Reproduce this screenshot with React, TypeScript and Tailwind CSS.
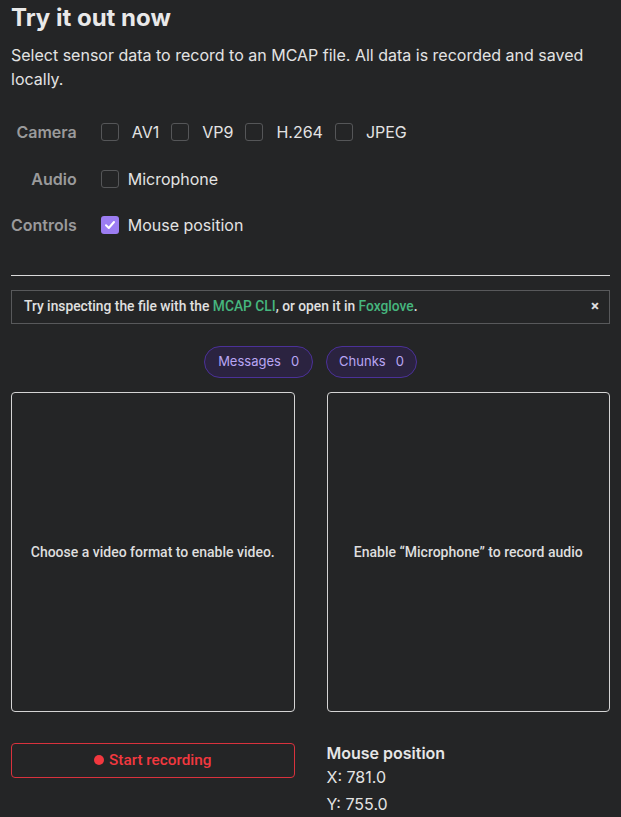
import React from "react";

function Box({ checked }: { checked?: boolean }) {
  if (checked) {
    return (
      <span className="flex h-[18px] w-[18px] shrink-0 items-center justify-center rounded-[3px] bg-[#9c7df2]">
        <svg width="12" height="12" viewBox="0 0 12 12" fill="none">
          <path d="M2 6.3 L4.8 9 L10 3" stroke="white" strokeWidth="2" strokeLinecap="round" strokeLinejoin="round" />
        </svg>
      </span>
    );
  }
  return <span className="block h-[18px] w-[18px] shrink-0 rounded-[3px] border-[1.5px] border-[#555658]" />;
}

function Item({ label, checked, gap }: { label: string; checked?: boolean; gap: string }) {
  return (
    <label className="flex items-center">
      <Box checked={checked} />
      <span className={gap}>{label}</span>
    </label>
  );
}

export default function App() {
  return (
    <div className="min-h-screen bg-[#242526] px-[11px] text-[#e3e3e3] font-['Inter',sans-serif]">
      <h2 className="pt-[3px] text-[24px] font-bold leading-[30px] text-[#e9e9e9]">Try it out now</h2>
      <p className="mt-[10px] text-[16px] leading-[24px]">
        Select sensor data to record to an MCAP file. All data is recorded and saved locally.
      </p>

      <div className="mt-[18px] grid grid-cols-[auto_1fr] gap-x-6 text-[16px]">
        <div className="flex h-[46.5px] items-center justify-end font-semibold text-[#9a9a9b]">Camera</div>
        <div className="flex h-[46.5px] items-center gap-3">
          <Item label="AV1" gap="ml-[13px]" />
          <Item label="VP9" gap="ml-[13px]" />
          <Item label="H.264" gap="ml-[13px]" />
          <Item label="JPEG" gap="ml-[13px]" />
        </div>
        <div className="flex h-[46.5px] items-center justify-end font-semibold text-[#9a9a9b]">Audio</div>
        <div className="flex h-[46.5px] items-center">
          <Item label="Microphone" gap="ml-[9px]" />
        </div>
        <div className="flex h-[46.5px] items-center justify-end font-semibold text-[#9a9a9b]">Controls</div>
        <div className="flex h-[46.5px] items-center">
          <Item label="Mouse position" checked gap="ml-[9px]" />
        </div>
      </div>

      <div className="mt-[26px] h-px bg-[#dadada]" />

      <div className="mt-[14px] flex h-[34px] items-center justify-between border border-[#58595b] pl-[12px] pr-[10px] font-['Roboto',sans-serif] text-[13.8px] font-medium text-[#e0e0e0]">
        <span>
          Try inspecting the file with the <span className="text-[#46b67e]">MCAP CLI</span>, or open it in{" "}
          <span className="text-[#46b67e]">Foxglove</span>.
        </span>
        <span className="text-[15px] font-bold leading-none">×</span>
      </div>

      <div className="mt-[22px] flex justify-center gap-[13px] text-[13px] text-[#b9a6f3]">
        <span className="flex h-[32px] items-center gap-[10px] rounded-full border border-[#4b3198] bg-[#2b2340] px-[13px]">
          <span>Messages</span>
          <span>0</span>
        </span>
        <span className="flex h-[32px] items-center gap-[10px] rounded-full border border-[#4b3198] bg-[#2b2340] px-[12px]">
          <span>Chunks</span>
          <span>0</span>
        </span>
      </div>

      <div className="mt-[14.5px] grid grid-cols-2 gap-x-8 font-['Roboto',sans-serif] text-[14px] font-medium text-[#dedede]">
        <div className="flex h-[320px] items-center justify-center rounded-[4px] border border-[#d4d4d4]">
          Choose a video format to enable video.
        </div>
        <div className="flex h-[320px] items-center justify-center rounded-[4px] border border-[#d4d4d4]">
          Enable “Microphone” to record audio
        </div>
      </div>

      <div className="mt-[28.5px] grid grid-cols-2 items-start gap-x-8">
        <button className="mt-[2px] flex h-[35px] items-center justify-center gap-[5px] rounded-[4px] border border-[#d9323d] font-['Roboto',sans-serif] text-[15.3px] font-medium text-[#f2383f]">
          <span className="h-[10px] w-[10px] rounded-full bg-[#f2383f]" />
          Start recording
        </button>
        <div className="text-[16px]">
          <div className="font-semibold leading-[24px] text-[#e6e6e6]">Mouse position</div>
          <div className="leading-[24px]">X: 781.0</div>
          <div className="mt-[3px] leading-[24px]">Y: 755.0</div>
        </div>
      </div>
    </div>
  );
}
